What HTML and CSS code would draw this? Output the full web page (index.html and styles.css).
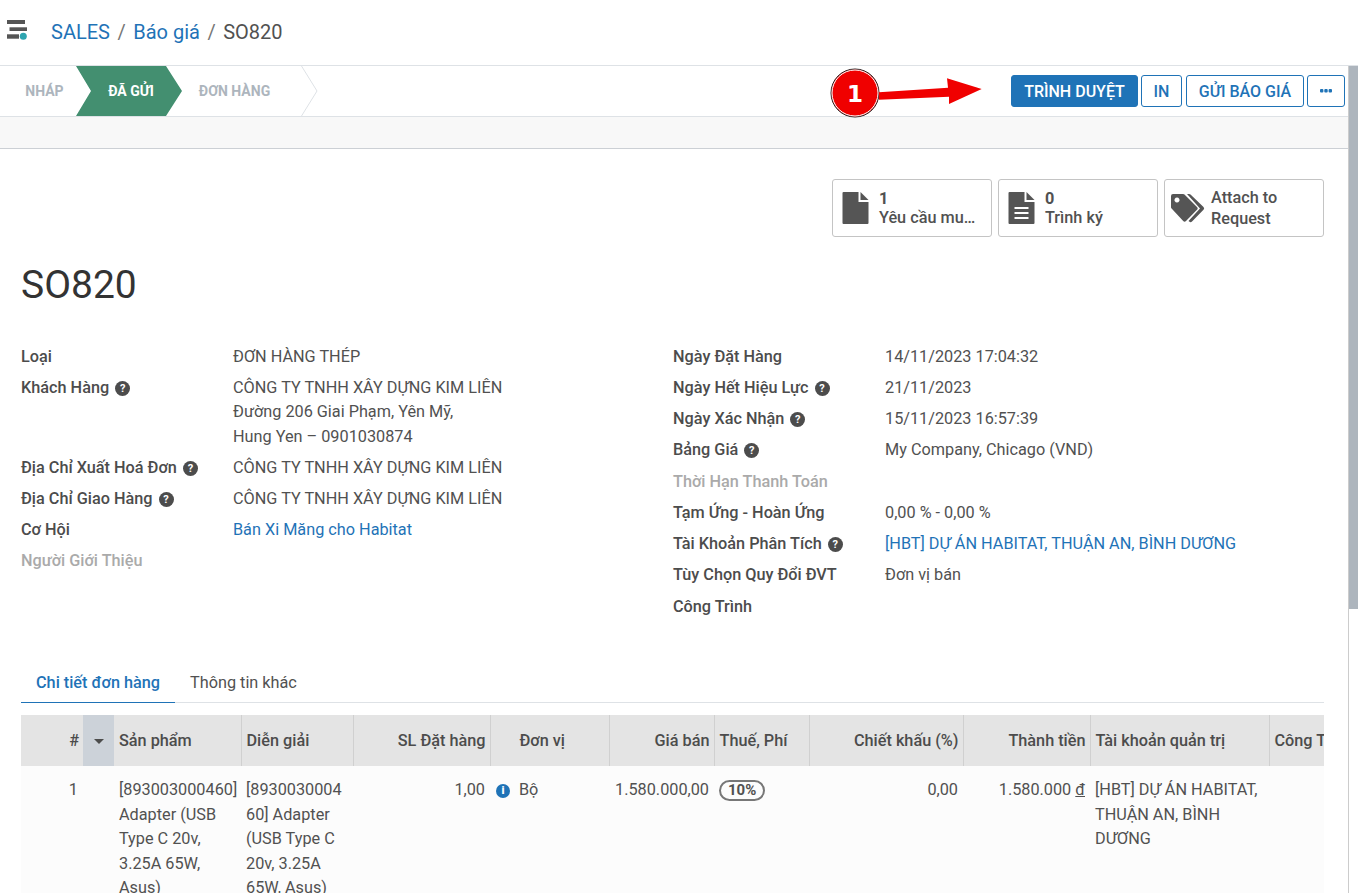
FILE: index.html
```html
<!DOCTYPE html>
<html lang="vi">
<head>
    <meta charset="UTF-8">
    <meta name="viewport" content="width=device-width, initial-scale=1.0">
    <title>SO820</title>
    <link rel="stylesheet" href="styles.css">
</head>
<body>
    <header class="topbar">
        <svg class="menu-icon" width="23" height="22" viewBox="0 0 23 22">
            <rect x="1" y="1" width="18" height="4" fill="#555"/>
            <rect x="3.500" y="8.300" width="17.500" height="3.700" fill="#555"/>
            <rect x="1" y="15.300" width="12" height="4.400" fill="#555"/>
            <circle cx="17.300" cy="17.300" r="3.500" fill="#2ea5b0"/>
        </svg>
        <nav class="breadcrumb">
            <a>SALES</a><span class="sep">/</span><a>Báo giá</a><span class="sep">/</span><span>SO820</span>
        </nav>
    </header>

    <div class="workspace">
        <div class="scrollbar"><div class="scrollbar-thumb"></div></div>

        <div class="statusbar">
            <div class="steps">
                <div class="step step-first">NHÁP</div>
                <div class="step step-current">ĐÃ GỬI</div>
                <div class="step step-last">
                    ĐƠN HÀNG
                    <svg class="step-end" width="17" height="50" viewBox="0 0 17 50"><path d="M0.5 0 L16 25 L0.5 50" fill="none" stroke="#dee2e6"/></svg>
                </div>
            </div>
            <div class="actions">
                <button class="btn btn-primary">TRÌNH DUYỆT</button>
                <button class="btn btn-in">IN</button>
                <button class="btn btn-send">GỬI BÁO GIÁ</button>
                <button class="btn btn-more">
                    <svg width="12" height="4" viewBox="0 0 12 4"><rect x="0" y="0" width="3.400" height="3.400" rx="1" fill="#1f73b7"/><rect x="4.300" y="0" width="3.400" height="3.400" rx="1" fill="#1f73b7"/><rect x="8.600" y="0" width="3.400" height="3.400" rx="1" fill="#1f73b7"/></svg>
                </button>
            </div>
            <!-- chu thich do tren anh -->
            <svg class="callout" width="160" height="52" viewBox="0 0 160 52">
                <circle cx="25" cy="26" r="24" fill="#f00000" stroke="#222" stroke-width="1"/>
                <circle cx="25" cy="26" r="23" fill="none" stroke="#fff" stroke-width="1"/>
                <path d="M49 25.300 L118 20.700 L117 11.300 L151.700 22 L119 37 L119 29.700 L49 32.700 Z" fill="#f00000"/>
                <text x="25" y="35" text-anchor="middle" class="callout-num">1</text>
            </svg>
        </div>
        <div class="band"></div>

        <main class="sheet">
            <div class="stat-buttons">
                <div class="stat">
                    <svg width="27" height="32" viewBox="0 0 26 32"><path d="M1 0 H16 V10 H26 V31 a1 1 0 0 1 -1 1 H1 a1 1 0 0 1 -1 -1 V1 a1 1 0 0 1 1 -1 Z M18 0 L26 8 H18 Z" fill="#555"/></svg>
                    <div class="stat-text"><b>1</b><span>Yêu cầu mu…</span></div>
                </div>
                <div class="stat">
                    <svg width="27" height="32" viewBox="0 0 26 32"><path fill-rule="evenodd" d="M1 0 H16 V10 H26 V31 a1 1 0 0 1 -1 1 H1 a1 1 0 0 1 -1 -1 V1 a1 1 0 0 1 1 -1 Z M6 15 V17 H20 V15 Z M6 20 V22 H20 V20 Z M6 25 V27 H20 V25 Z M18 0 L26 8 H18 Z" fill="#555"/></svg>
                    <div class="stat-text"><b>0</b><span>Trình ký</span></div>
                </div>
                <div class="stat stat-tag">
                    <svg width="34" height="30" viewBox="0 0 34 30"><path fill-rule="evenodd" d="M2 1 H12 a2 2 0 0 1 1.500 .6 L26 14 a2 2 0 0 1 0 2.800 L15 28 a2 2 0 0 1 -2.800 0 L.6 15.500 A2 2 0 0 1 0 14 V3 a2 2 0 0 1 2 -2 Z M6 4.500 a2.500 2.500 0 1 0 0.010 0 Z" fill="#555"/><path d="M16 1 H18 a2 2 0 0 1 1.500 .6 L32.500 14 a2 2 0 0 1 0 2.800 L21 28.500 a2 2 0 0 1 -2.800 0 L17.500 28 L29 15.400 Z" fill="#555"/></svg>
                    <div class="stat-text stat-plain"><span>Attach to</span><span>Request</span></div>
                </div>
            </div>

            <h1 class="title">SO820</h1>

            <div class="form-cols">
                <div class="form-col">
                    <div class="row"><label>Loại</label><div>ĐƠN HÀNG THÉP</div></div>
                    <div class="row"><label>Khách Hàng <i class="help">?</i></label><div>CÔNG TY TNHH XÂY DỰNG KIM LIÊN<br>Đường 206 Giai Phạm, Yên Mỹ,<br>Hung Yen – 0901030874</div></div>
                    <div class="row"><label>Địa Chỉ Xuất Hoá Đơn <i class="help">?</i></label><div>CÔNG TY TNHH XÂY DỰNG KIM LIÊN</div></div>
                    <div class="row"><label>Địa Chỉ Giao Hàng <i class="help">?</i></label><div>CÔNG TY TNHH XÂY DỰNG KIM LIÊN</div></div>
                    <div class="row"><label>Cơ Hội</label><div><a>Bán Xi Măng cho Habitat</a></div></div>
                    <div class="row"><label class="muted">Người Giới Thiệu</label><div></div></div>
                </div>
                <div class="form-col form-col-right">
                    <div class="row"><label>Ngày Đặt Hàng</label><div>14/11/2023 17:04:32</div></div>
                    <div class="row"><label>Ngày Hết Hiệu Lực <i class="help">?</i></label><div>21/11/2023</div></div>
                    <div class="row"><label>Ngày Xác Nhận <i class="help">?</i></label><div>15/11/2023 16:57:39</div></div>
                    <div class="row"><label>Bảng Giá <i class="help">?</i></label><div>My Company, Chicago (VND)</div></div>
                    <div class="row"><label class="muted">Thời Hạn Thanh Toán</label><div></div></div>
                    <div class="row"><label>Tạm Ứng - Hoàn Ứng</label><div>0,00 % - 0,00 %</div></div>
                    <div class="row"><label>Tài Khoản Phân Tích <i class="help">?</i></label><div><a>[HBT] DỰ ÁN HABITAT, THUẬN AN, BÌNH DƯƠNG</a></div></div>
                    <div class="row"><label>Tùy Chọn Quy Đổi ĐVT</label><div>Đơn vị bán</div></div>
                    <div class="row"><label>Công Trình</label><div></div></div>
                </div>
            </div>

            <div class="tabs">
                <div class="tab tab-active">Chi tiết đơn hàng</div>
                <div class="tab">Thông tin khác</div>
            </div>

            <div class="table-wrap">
                <table class="lines">
                    <colgroup>
                        <col class="c-num"><col class="c-sort"><col class="c-product"><col class="c-desc"><col class="c-qty"><col class="c-unit"><col class="c-price"><col class="c-tax"><col class="c-disc"><col class="c-total"><col class="c-account"><col class="c-work">
                    </colgroup>
                    <thead>
                        <tr>
                            <th class="num">#</th>
                            <th class="sort"><span class="caret"></span></th>
                            <th>Sản phẩm</th>
                            <th class="edge">Diễn giải</th>
                            <th class="num edge">SL Đặt hàng</th>
                            <th class="unit-head edge">Đơn vị</th>
                            <th class="num edge">Giá bán</th>
                            <th class="edge">Thuế, Phí</th>
                            <th class="num edge">Chiết khấu (%)</th>
                            <th class="num edge">Thành tiền</th>
                            <th class="edge">Tài khoản quản trị</th>
                            <th class="edge nowrap">Công Trình</th>
                        </tr>
                    </thead>
                    <tbody>
                        <tr>
                            <td class="num">1</td>
                            <td></td>
                            <td>[893003000460] Adapter (USB Type C 20v, 3.25A 65W, Asus)</td>
                            <td class="wrap-any">[893003000460] Adapter (USB Type C 20v, 3.25A 65W, Asus)</td>
                            <td class="num">1,00</td>
                            <td class="unit"><i class="info">i</i>Bộ</td>
                            <td class="num">1.580.000,00</td>
                            <td><span class="tax-tag">10%</span></td>
                            <td class="num">0,00</td>
                            <td class="num">1.580.000 <u>đ</u></td>
                            <td>[HBT] DỰ ÁN HABITAT, THUẬN AN, BÌNH DƯƠNG</td>
                            <td></td>
                        </tr>
                    </tbody>
                </table>
            </div>
        </main>
    </div>
</body>
</html>
```

FILE: styles.css
```css
html, body {
    margin: 0;
    padding: 0;
    height: 893px;
    overflow: hidden;
    background: #fff;
}
body {
    font-family: Roboto, "Noto Sans", sans-serif;
    font-size: 16.25px;
    line-height: 24.6px;
    color: #515151;
}
a {
    color: #1f73b7;
}

/* thanh tren */
.topbar {
    height: 65px;
    display: flex;
    align-items: center;
    border-bottom: 1px solid #dee2e6;
}
.menu-icon {
    margin: 0 0 0 6px;
    position: relative;
    top: -2.5px;
}
.breadcrumb {
    margin-left: 22px;
    font-size: 20px;
    display: flex;
}
.breadcrumb .sep {
    color: #777;
    margin: 0 7.5px;
}

.workspace {
    position: relative;
    height: 827px;
    overflow: hidden;
}
.scrollbar {
    position: absolute;
    top: 0;
    right: 0;
    bottom: 0;
    width: 9px;
    border-left: 1px solid #ccc;
    background: #fff;
    z-index: 2;
}
.scrollbar-thumb {
    height: 543px;
    background: #adb5bd;
}

/* trang thai */
.statusbar {
    height: 50px;
    display: flex;
    justify-content: space-between;
    align-items: center;
    border-bottom: 1px solid #dee2e6;
    padding-right: 13px;
    position: relative;
}
.steps {
    display: flex;
    height: 50px;
    font-size: 14px;
    font-weight: 700;
    color: #adb5bd;
    line-height: 50px;
}
.step {
    text-align: center;
    box-sizing: border-box;
}
.step-first {
    width: 76px;
    padding-left: 13px;
}
.step-current {
    width: 106px;
    padding-left: 4px;
    background: #438f70;
    color: #fff;
    clip-path: polygon(0 0, 90px 0, 106px 50%, 90px 100%, 0 100%, 15px 50%);
}
.step-last {
    width: 119px;
    position: relative;
    padding-right: 14px;
}
.step-end {
    position: absolute;
    left: 119px;
    top: 0;
}
.actions {
    display: flex;
    gap: 3px;
}
.btn {
    height: 32px;
    box-sizing: border-box;
    border: 1px solid #1f73b7;
    border-radius: 3px;
    background: #fff;
    color: #1f73b7;
    font-family: inherit;
    font-size: 16px;
    font-weight: 500;
    padding: 0;
}
.btn-primary {
    width: 127px;
    background: #1f73b7;
    color: #fff;
}
.btn-in {
    width: 41px;
    margin-right: 1px;
}
.btn-send {
    width: 118px;
}
.btn-more {
    width: 38px;
    display: flex;
    align-items: center;
    justify-content: center;
}
.callout {
    position: absolute;
    left: 830px;
    top: 1px;
    overflow: visible;
}
.callout-num {
    font-family: "DejaVu Sans", sans-serif;
    font-size: 23px;
    font-weight: 700;
    fill: #fff;
}

.band {
    height: 31px;
    background: #f8f8f8;
    border-bottom: 1px solid #ccd0d5;
}

/* noi dung */
.sheet {
    padding: 30px 34px 0 21px;
}
.stat-buttons {
    display: flex;
    justify-content: flex-end;
    gap: 6px;
}
.stat {
    width: 160px;
    height: 58px;
    box-sizing: border-box;
    border: 1px solid #c4c4c4;
    border-radius: 3px;
    display: flex;
    align-items: center;
    padding-left: 9px;
    gap: 10px;
    font-weight: 500;
}
.stat-tag {
    padding-left: 6px;
    gap: 6px;
}
.stat-text {
    display: flex;
    flex-direction: column;
    line-height: 19px;
}
.stat-text b {
    font-weight: 700;
}
.stat-plain {
    line-height: 21px;
}
.title {
    font-size: 39px;
    font-weight: 400;
    line-height: 50px;
    margin: 23px 0 0;
    color: #333;
}
.form-cols {
    display: grid;
    grid-template-columns: 652px 1fr;
    margin-top: 34.5px;
}
.row {
    display: grid;
    grid-template-columns: 212px 1fr;
    padding-bottom: 6.5px;
}
.form-col-right .row {
    padding-bottom: 6.7px;
}
.row label {
    font-weight: 500;
    color: #4c4c4c;
}
.row label.muted {
    color: #aaa;
}
.help {
    display: inline-block;
    width: 15px;
    height: 15px;
    margin-left: 2px;
    border-radius: 50%;
    background: #4c4c4c;
    color: #fff;
    font-size: 11px;
    font-weight: 700;
    font-style: normal;
    line-height: 15px;
    text-align: center;
    vertical-align: 1px;
}

.tabs {
    display: flex;
    margin-top: 37.2px;
    border-bottom: 1px solid #dee2e6;
    height: 39px;
}
.tab {
    padding: 0 15px;
    line-height: 40px;
}
.tab-active {
    color: #1f73b7;
    font-weight: 500;
    border-bottom: 1px solid #1f73b7;
    height: 39px;
}

.table-wrap {
    margin-top: 12px;
    overflow: hidden;
}
.lines {
    table-layout: fixed;
    border-collapse: collapse;
    width: 1400px;
}
.c-num { width: 62px; }
.c-sort { width: 31px; }
.c-product { width: 127px; }
.c-desc { width: 112px; }
.c-qty { width: 137px; }
.c-unit { width: 119px; }
.c-price { width: 105px; }
.c-tax { width: 95px; }
.c-disc { width: 154px; }
.c-total { width: 127px; }
.c-account { width: 179px; }
.c-work { width: 152px; }
.lines th {
    height: 51px;
    padding: 2px 4px 0 5px;
    background: #e4e4e4;
    font-weight: 500;
    text-align: left;
    box-sizing: border-box;
    color: #4c4c4c;
}
.lines th.edge {
    border-left: 1px solid #d0d0d0;
}
.lines th.sort {
    background: #ccd2d9;
    text-align: center;
}
.lines th.nowrap {
    white-space: nowrap;
}
.lines th.unit-head {
    padding-left: 29px;
}
.caret {
    display: inline-block;
    border-left: 5px solid transparent;
    border-right: 5px solid transparent;
    border-top: 5px solid #4c4c4c;
    vertical-align: 2px;
}
.lines td {
    background: #fcfcfc;
    padding: 12px 5px 0;
    line-height: 24.5px;
    vertical-align: top;
}
.lines .num {
    text-align: right;
}
.lines td.wrap-any {
    overflow-wrap: anywhere;
}
.lines td.unit {
    padding-left: 6px;
}
.info {
    display: inline-block;
    width: 14px;
    height: 14px;
    margin-right: 9px;
    border-radius: 50%;
    background: #1f73b7;
    color: #fff;
    font-size: 11px;
    font-weight: 900;
    font-style: normal;
    line-height: 14px;
    text-align: center;
    vertical-align: 1px;
}
.tax-tag {
    display: inline-block;
    padding: 0 7px;
    border: 2px solid #777;
    border-radius: 11px;
    font-size: 15px;
    font-weight: 700;
    line-height: 17px;
}
```
